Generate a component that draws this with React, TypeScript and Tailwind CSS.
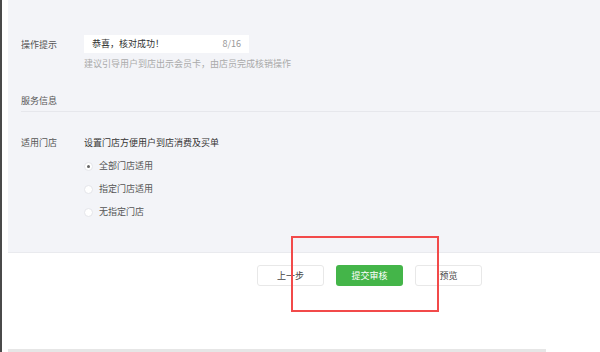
import React from "react";

const font = { fontFamily: '"Noto Sans CJK SC", "Noto Sans", sans-serif' };

function Radio({ label, checked }: { label: string; checked?: boolean }) {
  return (
    <label className="flex h-[23px] items-center gap-[6px] text-[9px] text-[#555]">
      <span className="flex h-[9px] w-[9px] items-center justify-center rounded-full border border-[#e4e5ea] bg-white">
        {checked && <span className="h-[3px] w-[3px] rounded-full bg-[#666]" />}
      </span>
      {label}
    </label>
  );
}

export default function App() {
  return (
    <div
      className="relative flex h-[352px] w-[600px] overflow-hidden bg-white"
      style={font}
    >
      <div className="w-[2px] shrink-0 bg-[#4a4a4a]" />
      <div className="flex min-w-0 flex-1 flex-col pl-[6px]">
        <section className="h-[253px] border-b border-[#e9eaee] bg-[#f3f4f8] pt-[35px]">
          <div className="flex">
            <div className="w-[76px] shrink-0 pl-[13px] pt-[3px] text-[9px] text-[#555]">
              操作提示
            </div>
            <div>
              <div className="flex h-[18px] w-[165px] items-center justify-between bg-white px-[8px] text-[9px]">
                <span className="text-[#333]">恭喜，核对成功！</span>
                <span className="text-[#999]">8/16</span>
              </div>
              <p className="mt-[4px] text-[9px] text-[#aaa]">
                建议引导用户到店出示会员卡，由店员完成核销操作
              </p>
            </div>
          </div>

          <div className="ml-[13px] mt-[23px] border-b border-[#e6e7ec] pb-[4px] text-[9px] text-[#555]">
            服务信息
          </div>

          <div className="mt-[24px] flex">
            <div className="w-[76px] shrink-0 pl-[13px] text-[9px] text-[#555]">
              适用门店
            </div>
            <div>
              <p className="mb-[5px] text-[9px] text-[#333]">
                设置门店方便用户到店消费及买单
              </p>
              <Radio label="全部门店适用" checked />
              <Radio label="指定门店适用" />
              <Radio label="无指定门店" />
            </div>
          </div>
        </section>

        <div className="flex gap-[12px] pl-[249px] pt-[12px]">
          <button className="h-[21px] w-[67px] rounded-[3px] border border-[#e8e8e8] bg-white text-[9px] text-[#444]">
            上一步
          </button>
          <button className="h-[21px] w-[67px] rounded-[3px] bg-[#44b549] text-[9px] text-white">
            提交审核
          </button>
          <button className="h-[21px] w-[67px] rounded-[3px] border border-[#e8e8e8] bg-white text-[9px] text-[#444]">
            预览
          </button>
        </div>

        <div className="mt-auto h-[3px] w-[538px] bg-[#e6e6e6]" />
      </div>

      <div className="pointer-events-none absolute left-[291px] top-[236px] h-[76px] w-[148px] border-2 border-[#f24a4a]" />
    </div>
  );
}
